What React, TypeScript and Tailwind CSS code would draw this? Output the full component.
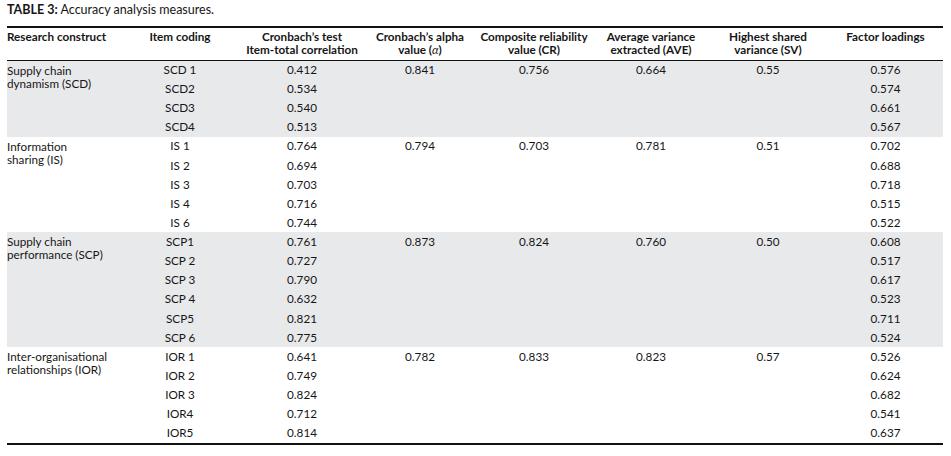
const groups = [
  {
    name: ['Supply chain', 'dynamism (SCD)'],
    shaded: true,
    alpha: '0.841',
    cr: '0.756',
    ave: '0.664',
    sv: '0.55',
    rows: [
      ['SCD 1', '0.412', '0.576'],
      ['SCD2', '0.534', '0.574'],
      ['SCD3', '0.540', '0.661'],
      ['SCD4', '0.513', '0.567'],
    ],
  },
  {
    name: ['Information', 'sharing (IS)'],
    shaded: false,
    alpha: '0.794',
    cr: '0.703',
    ave: '0.781',
    sv: '0.51',
    rows: [
      ['IS 1', '0.764', '0.702'],
      ['IS 2', '0.694', '0.688'],
      ['IS 3', '0.703', '0.718'],
      ['IS 4', '0.716', '0.515'],
      ['IS 6', '0.744', '0.522'],
    ],
  },
  {
    name: ['Supply chain', 'performance (SCP)'],
    shaded: true,
    alpha: '0.873',
    cr: '0.824',
    ave: '0.760',
    sv: '0.50',
    rows: [
      ['SCP1', '0.761', '0.608'],
      ['SCP 2', '0.727', '0.517'],
      ['SCP 3', '0.790', '0.617'],
      ['SCP 4', '0.632', '0.523'],
      ['SCP5', '0.821', '0.711'],
      ['SCP 6', '0.775', '0.524'],
    ],
  },
  {
    name: ['Inter-organisational', 'relationships (IOR)'],
    shaded: false,
    alpha: '0.782',
    cr: '0.833',
    ave: '0.823',
    sv: '0.57',
    rows: [
      ['IOR 1', '0.641', '0.526'],
      ['IOR 2', '0.749', '0.624'],
      ['IOR 3', '0.824', '0.682'],
      ['IOR4', '0.712', '0.541'],
      ['IOR5', '0.814', '0.637'],
    ],
  },
]

export default function App() {
  return (
    <div className="min-h-[456px] bg-white pl-[7px] pt-[3px] text-[11.7px] text-[#161616] [font-family:Lato,'Liberation_Sans',sans-serif]">
      <p className="h-[23px] leading-[14px] text-[12.5px]">
        <span className="font-bold">TABLE 3:</span> Accuracy analysis measures.
      </p>

      <table className="w-[936px] table-fixed border-collapse">
        <colgroup>
          <col className="w-[123px]" />
          <col className="w-[100px]" />
          <col className="w-[144px]" />
          <col className="w-[92px]" />
          <col className="w-[136px]" />
          <col className="w-[98px]" />
          <col className="w-[136px]" />
          <col className="w-[107px]" />
        </colgroup>
        <thead>
          <tr className="h-[33px] border-t-2 border-b-[1.5px] border-[#111] align-top font-bold leading-[13px]">
            <th className="pt-[2px] text-left font-bold">Research construct</th>
            <th className="pt-[2px] text-center font-bold">Item coding</th>
            <th className="pt-[2px] text-center font-bold">
              Cronbach’s test
              <br />
              Item-total correlation
            </th>
            <th className="pt-[2px] text-center font-bold">
              Cronbach’s alpha
              <br />
              value (<span className="font-normal italic">α</span>)
            </th>
            <th className="pt-[2px] text-center font-bold">
              Composite reliability
              <br />
              value (CR)
            </th>
            <th className="pt-[2px] text-center font-bold">
              Average variance
              <br />
              extracted (AVE)
            </th>
            <th className="pt-[2px] text-center font-bold">
              Highest shared
              <br />
              variance (SV)
            </th>
            <th className="pt-[2px] pr-[8px] text-center font-bold">Factor loadings</th>
          </tr>
        </thead>
        {groups.map(g => (
          <tbody key={g.name[0] + g.name[1]} className={g.shaded ? 'bg-[#e8e9eb]' : 'bg-white'}>
            {g.rows.map((r, i) => (
              <tr key={r[0]} className="h-[19.15px]">
                {i === 0 && (
                  <td rowSpan={g.rows.length} className="pt-[3px] align-top leading-[13px]">
                    {g.name[0]}
                    <br />
                    {g.name[1]}
                  </td>
                )}
                <td className="text-center">{r[0]}</td>
                <td className="text-center">{r[1]}</td>
                <td className="text-center">{i === 0 ? g.alpha : ''}</td>
                <td className="text-center">{i === 0 ? g.cr : ''}</td>
                <td className="text-center">{i === 0 ? g.ave : ''}</td>
                <td className="text-center">{i === 0 ? g.sv : ''}</td>
                <td className="pr-[8px] text-center">{r[2]}</td>
              </tr>
            ))}
          </tbody>
        ))}
      </table>
      <div className="h-[2.5px] w-[936px] bg-[#111]" />
    </div>
  )
}
